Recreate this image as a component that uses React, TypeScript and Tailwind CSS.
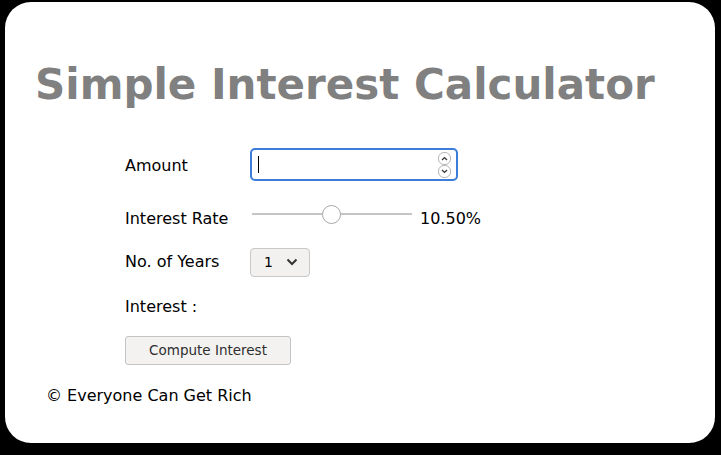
import React from "react";

export default function App() {
  return (
    <div className="w-[721px] h-[455px] bg-black pt-[2px] pl-[5px]" style={{ fontFamily: '"DejaVu Sans", sans-serif' }}>
      <div className="w-[710px] h-[441px] bg-white rounded-[26px] flex flex-col">
        <h1 className="text-[42px] leading-none font-bold text-[#808080] pl-[30px] pt-[62px] h-[146px]">
          Simple Interest Calculator
        </h1>
        <div className="pl-[120px] flex flex-col text-[16px] text-black">
          <div className="flex items-center h-[36px]">
            <span className="w-[125px]">Amount</span>
            <div className="w-[208px] h-[33px] -mt-[3px] border-2 border-[#3b7dd8] rounded-[5px] flex items-center pl-[6px] pr-[5px]">
              <div className="w-[1px] h-[17px] bg-black" />
              <div className="flex-1" />
              <div className="flex flex-col">
                <svg width="13" height="13" viewBox="0 0 13 13">
                  <rect x="0.5" y="0.5" width="12" height="12" rx="5.5" fill="white" stroke="#b5b5b5" />
                  <path d="M4 8 L6.5 5.5 L9 8" fill="none" stroke="#333" strokeWidth="1.2" />
                </svg>
                <svg width="13" height="13" viewBox="0 0 13 13">
                  <rect x="0.5" y="0.5" width="12" height="12" rx="5.5" fill="white" stroke="#b5b5b5" />
                  <path d="M4 5 L6.5 7.5 L9 5" fill="none" stroke="#333" strokeWidth="1.2" />
                </svg>
              </div>
            </div>
          </div>
          <div className="flex items-center h-[36px] mt-[17px]">
            <span className="w-[127px]">Interest Rate</span>
            <div className="w-[160px] h-[20px] -mt-[10px] relative flex items-center">
              <div className="w-full h-[2px] bg-[#c4c4c4]" />
              <div className="absolute left-[70px] top-[1px] w-[19px] h-[19px] rounded-full bg-white border border-[#a8a8a8]" />
            </div>
            <span className="ml-[8px]">10.50%</span>
          </div>
          <div className="flex items-center h-[30px] mt-[10px]">
            <span className="w-[125px]">No. of Years</span>
            <div className="w-[60px] h-[29px] border border-[#c8c8c8] rounded-[4px] bg-[#f2f1f0] flex items-center pl-[13px] gap-[13px] text-[14px]">
              <span>1</span>
              <svg width="12" height="8" viewBox="0 0 12 8">
                <path d="M1.5 1.5 L6 6 L10.5 1.5" fill="none" stroke="#333" strokeWidth="2" />
              </svg>
            </div>
          </div>
          <div className="flex items-center h-[30px] mt-[15px]">
            <span>Interest :</span>
          </div>
          <div className="flex items-center mt-[14px]">
            <button className="w-[166px] h-[29px] border border-[#c4c4c4] rounded-[3px] bg-[#f3f2f1] text-[13.5px] text-[#2e2e2e]">
              Compute Interest
            </button>
          </div>
        </div>
        <div className="pl-[41px] mt-[19px] text-[16px] text-black">© Everyone Can Get Rich</div>
      </div>
    </div>
  );
}
